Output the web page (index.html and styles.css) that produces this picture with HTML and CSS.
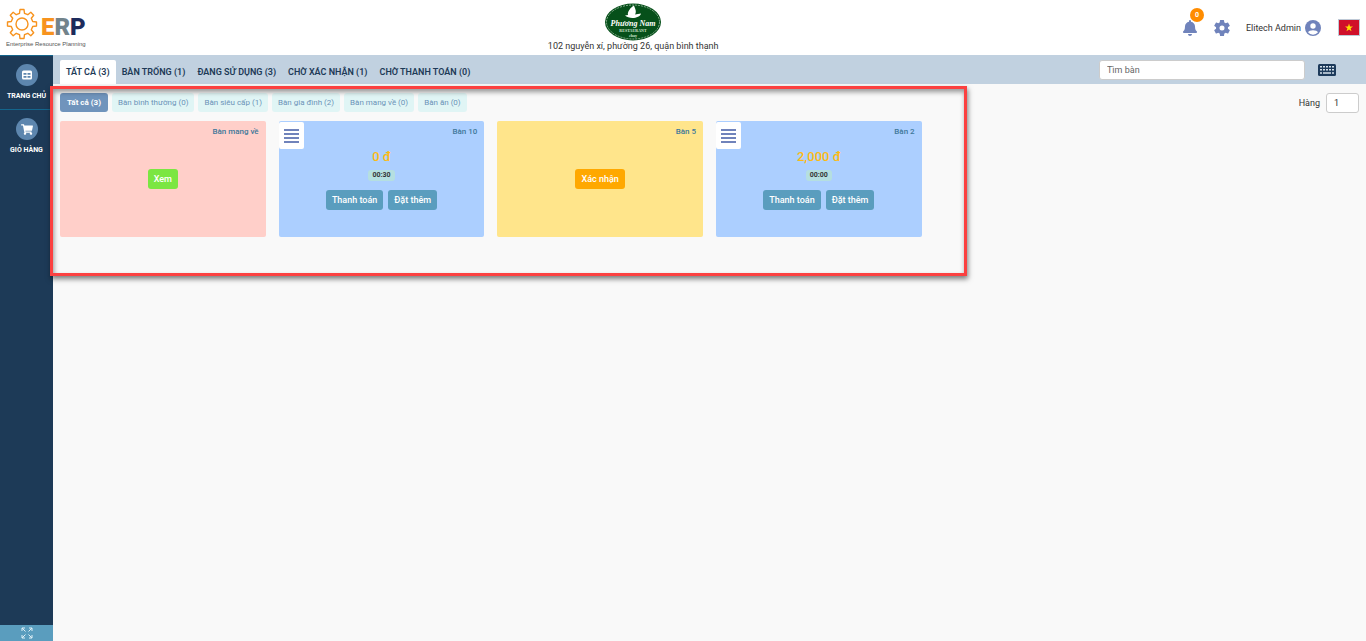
FILE: index.html
```html
<!DOCTYPE html>
<html lang="vi">
<head>
<meta charset="utf-8">
<title>ERP - Quản lý bàn</title>
<link rel="stylesheet" href="styles.css">
</head>
<body>
<header class="header">
  <a class="brand" href="#" aria-label="ERP">
    <svg width="88" height="48" viewBox="0 0 88 48">
      <path class="gear" d="M19.500 13.300L20 9.500h4l.5 3.800 3.300 1.400 3-2.400 2.900 2.900-2.400 3 1.400 3.300 3.800.5v4l-3.800.5-1.400 3.300 2.400 3-2.900 2.900-3-2.400-3.300 1.400-.5 3.800h-4l-.5-3.800-3.300-1.400-3 2.400-2.900-2.900 2.400-3-1.400-3.300-3.800-.5v-4l3.800-.5 1.400-3.300-2.400-3 2.900-2.900 3 2.400z"/>
      <circle class="gear" cx="22" cy="24" r="6"/>
      <text class="brand-letters" x="41" y="35"><tspan fill="#f7931e">E</tspan><tspan fill="#72838b">R</tspan><tspan fill="#1d2b5c">P</tspan></text>
      <text class="brand-sub" x="6" y="46">Enterprise Resource Planning</text>
    </svg>
  </a>
  <div class="shop">
    <svg width="56" height="38" viewBox="0 0 56 38">
      <ellipse cx="28" cy="19" rx="28" ry="18.500" fill="#06501a"/>
      <ellipse cx="28" cy="19" rx="26.500" ry="17" fill="none" stroke="#b9d0bb" stroke-width=".7" stroke-dasharray="2 1"/>
      <path d="M23 12c-1-3 3-8 6-9.500 1 3 3 6 1 9l6-1c-1 5-12 6-16 2z" fill="#fff"/>
      <text class="shop-name" x="28" y="23">Phương Nam</text>
      <text class="shop-sub" x="28" y="29">RESTAURANT</text>
      <text class="shop-sub" x="28" y="34">chay</text>
    </svg>
    <div class="address">102 nguyễn xí, phường 26, quận bình thạnh</div>
  </div>
  <div class="tools">
    <button class="icon-btn bell" aria-label="Thông báo">
      <svg width="14" height="16" viewBox="0 0 448 512"><path fill="#7083bb" d="M224 512c35 0 64-29 64-64H160c0 35 29 64 64 64zm215-150c-19-20-55-51-55-154 0-77-54-139-128-154V32a32 32 0 0 0-64 0v22C118 69 64 131 64 208c0 103-36 134-55 154-6 6-9 14-9 22 0 16 13 32 32 32h384c19 0 32-16 32-32 0-8-3-16-9-22z"/></svg>
      <span class="badge">0</span>
    </button>
    <button class="icon-btn" aria-label="Cài đặt">
      <svg width="20" height="20" viewBox="0 0 24 24"><path fill="#7083bb" d="M19.140 12.940c.04-.3.060-.61.060-.94s-.02-.64-.07-.94l2.030-1.580a.49.490 0 0 0 .12-.61l-1.920-3.320a.49.490 0 0 0-.59-.22l-2.390.96a7 7 0 0 0-1.620-.94l-.36-2.540a.48.480 0 0 0-.48-.41h-3.840a.47.470 0 0 0-.47.410l-.36 2.540c-.59.240-1.130.57-1.620.94l-2.390-.96a.48.480 0 0 0-.59.220L2.740 8.870a.47.470 0 0 0 .12.610l2.030 1.580a7 7 0 0 0 0 1.880l-2.030 1.580a.49.490 0 0 0-.12.610l1.920 3.320c.12.220.37.290.59.220l2.390-.96c.5.380 1.030.7 1.620.94l.36 2.540c.05.240.24.410.48.410h3.840c.24 0 .44-.17.470-.41l.36-2.540a7 7 0 0 0 1.620-.94l2.390.96c.22.080.47 0 .59-.22l1.920-3.320a.47.470 0 0 0-.12-.61zM12 15a3 3 0 1 1 0-6 3 3 0 0 1 0 6z"/></svg>
    </button>
    <a class="user" href="#">Elitech Admin
      <svg width="16" height="16" viewBox="0 0 16 16"><circle cx="8" cy="8" r="8" fill="#7083bb"/><circle cx="8" cy="6" r="2.700" fill="#fff"/><path d="M3 12.300C4 9.500 12 9.500 13 12.300a6.500 6.500 0 0 1-10 0z" fill="#fff"/></svg>
    </a>
    <button class="flag" aria-label="Tiếng Việt">
      <svg width="20" height="15" viewBox="0 0 20 15"><path fill="#ffe000" d="M10 3.500l1 3h3l-2.400 1.800.9 3-2.500-1.800-2.500 1.800.9-3L6 6.500h3z"/></svg>
    </button>
  </div>
</header>
<div class="layout">
  <aside class="sidebar">
    <nav>
      <a class="side-item" href="#">
        <span class="side-icon"><svg width="10" height="10" viewBox="0 0 10 10"><rect y=".5" width="10" height="9" rx="1.500" fill="#fff"/><path d="M1.500 3h3v1.700h-3zM5.500 3h3v1.700h-3zM1.500 6h3v1.700h-3zM5.500 6h3v1.700h-3z" fill="#5d86ae"/></svg></span>
        TRANG CHỦ
      </a>
      <a class="side-item" href="#">
        <span class="side-icon"><svg width="12" height="11" viewBox="0 0 576 512"><path fill="#fff" d="M528 301l47-208c4-15-8-29-23-29H159l-9-45C148 8 138 0 126 0H24C11 0 0 11 0 24v16c0 13 11 24 24 24h70l70 343a56 56 0 1 0 67 9h210a56 56 0 1 0 64-10l5-26c4-15-8-29-23-29H218l-7-32h294c11 0 21-8 23-18z"/></svg></span>
        GIỎ HÀNG
      </a>
    </nav>
    <button class="expand" aria-label="Toàn màn hình">
      <svg width="12" height="12" viewBox="0 0 12 12" fill="none" stroke="#dff0f6"><path d="M1 4V1h3M8 1h3v3M1 8v3h3M8 11h3V8M1 1l3.500 3.500M11 1L7.500 4.500M1 11l3.500-3.500M11 11L7.500 7.500"/></svg>
    </button>
  </aside>
  <main class="main">
    <div class="tabbar">
      <nav class="tabs">
        <button class="tab tab-active">TẤT CẢ (3)</button>
        <button class="tab">BÀN TRỐNG (1)</button>
        <button class="tab">ĐANG SỬ DỤNG (3)</button>
        <button class="tab">CHỜ XÁC NHẬN (1)</button>
        <button class="tab">CHỜ THANH TOÁN (0)</button>
      </nav>
      <input class="search" type="text" placeholder="Tìm bàn" aria-label="Tìm bàn">
      <button class="icon-btn keyboard" aria-label="Bàn phím">
        <svg width="18" height="12" viewBox="0 0 18 12"><rect width="18" height="12" rx="1.500" fill="#1d3a5b"/><path stroke="#d5e1ec" stroke-width="1.500" stroke-dasharray="2 1" d="M2 2.700h14.500M2 5.700h14.500"/><path stroke="#d5e1ec" stroke-width="1.500" d="M2 9h2M5 9h8M14 9h2"/></svg>
      </button>
    </div>
    <div class="filters">
      <div class="chips">
        <button class="chip chip-active">Tất cả (3)</button>
        <button class="chip">Bàn bình thường (0)</button>
        <button class="chip">Bàn siêu cấp (1)</button>
        <button class="chip">Bàn gia đình (2)</button>
        <button class="chip">Bàn mang về (0)</button>
        <button class="chip">Bàn ăn (0)</button>
      </div>
      <label class="row-label" for="row">Hàng</label>
      <input class="row-input" id="row" type="text" value="1">
    </div>
    <section class="cards">
      <article class="card card-pink">
        <h2 class="card-name">Bàn mang về</h2>
        <div class="card-body"><button class="btn btn-green">Xem</button></div>
      </article>
      <article class="card card-blue">
        <button class="menu" aria-label="Menu"><svg width="15" height="14" viewBox="0 0 15 14"><path d="M0 1h15M0 5h15M0 9h15M0 13h15" stroke="#7083bb" stroke-width="2"/></svg></button>
        <h2 class="card-name">Bàn 10</h2>
        <div class="card-body">
          <div class="price">0 đ</div>
          <div class="time">00:30</div>
          <div class="actions"><button class="btn">Thanh toán</button><button class="btn">Đặt thêm</button></div>
        </div>
      </article>
      <article class="card card-yellow">
        <h2 class="card-name">Bàn 5</h2>
        <div class="card-body"><button class="btn btn-orange">Xác nhận</button></div>
      </article>
      <article class="card card-blue">
        <button class="menu" aria-label="Menu"><svg width="15" height="14" viewBox="0 0 15 14"><path d="M0 1h15M0 5h15M0 9h15M0 13h15" stroke="#7083bb" stroke-width="2"/></svg></button>
        <h2 class="card-name">Bàn 2</h2>
        <div class="card-body">
          <div class="price">2,000 đ</div>
          <div class="time">00:00</div>
          <div class="actions"><button class="btn">Thanh toán</button><button class="btn">Đặt thêm</button></div>
        </div>
      </article>
    </section>
    <div class="highlight"></div>
  </main>
</div>
</body>
</html>
```
FILE: styles.css
```css
* { box-sizing: border-box; }
body {
  margin: 0;
  min-height: 100vh;
  display: flex;
  flex-direction: column;
  font-family: Roboto, "Noto Sans", sans-serif;
  font-size: 9px;
  color: #333;
  background: #f9f9f9;
}
button, input { font: inherit; color: inherit; margin: 0; }
button { border: 0; padding: 0; background: none; cursor: pointer; white-space: nowrap; }
a { color: inherit; text-decoration: none; }
svg { display: block; }

.header {
  display: grid;
  grid-template-columns: 11fr auto 13fr;
  height: 55px;
  background: #fff;
}
.gear { fill: none; stroke: #f7931e; stroke-width: 1.4; stroke-linejoin: round; }
.brand-letters { font: 900 24px Roboto, sans-serif; }
.brand-sub { font: 6px "Liberation Sans", sans-serif; fill: #555; }
.shop { display: flex; flex-direction: column; align-items: center; padding-top: 3px; }
.shop-name { font: italic 700 8px "Liberation Serif", serif; fill: #fff; text-anchor: middle; }
.shop-sub { font: 700 4px "Liberation Serif", serif; fill: #d5e5d7; text-anchor: middle; }
.address { line-height: 10px; }
.tools {
  display: flex;
  justify-content: flex-end;
  align-items: center;
  padding-right: 6px;
}
.icon-btn { position: relative; }
.bell { margin-right: 15px; }
.badge {
  position: absolute;
  left: 7px;
  top: -12px;
  width: 14px;
  height: 14px;
  border-radius: 50%;
  background: #ff8c00;
  color: #fff;
  font-size: 7px;
  font-weight: 700;
  line-height: 14px;
}
.user { display: flex; align-items: center; gap: 4px; margin: 0 17px 0 14px; }
.flag { border: 1px solid #bfc9d6; background: #d0102a; }

.layout { flex: 1; display: flex; }
.sidebar {
  width: 53px;
  display: flex;
  flex-direction: column;
  justify-content: space-between;
  background: #1d3a57;
  color: #fff;
}
.side-item {
  display: flex;
  flex-direction: column;
  align-items: center;
  gap: 5px;
  height: 54px;
  padding-top: 8px;
  border-top: 1px solid #14658c;
  font-size: 7px;
  font-weight: 700;
  line-height: 10px;
  white-space: nowrap;
}
.side-icon {
  display: flex;
  align-items: center;
  justify-content: center;
  width: 22px;
  height: 22px;
  border-radius: 50%;
  background: #5d86ae;
}
.expand { display: flex; justify-content: center; align-items: center; height: 16px; background: #5a9dbe; }

.main { position: relative; flex: 1; min-width: 0; }
.tabbar { display: flex; align-items: center; height: 29px; padding: 0 30px 0 7px; background: #c1d1e0; }
.tabs { display: flex; flex: 1; align-self: flex-end; }
.tab { height: 24px; padding: 0 6px; border-radius: 2px 2px 0 0; font-weight: 600; color: #1d3a57; }
.tab-active { background: #fff; }
.search { width: 206px; height: 20px; padding: 0 7px; border: 1px solid #ccc; border-radius: 3px; background: #fff; }
.search::placeholder { color: #666; opacity: 1; }
.keyboard { margin-left: 13px; }
.filters { display: flex; align-items: center; height: 37px; padding: 0 7px; }
.chips { display: flex; flex: 1; gap: 4px; }
.chip { height: 19px; padding: 0 6px; border-radius: 3px; background: #e0f5f5; color: #6b93b8; font-size: 8px; }
.chip-active { padding: 0 7px; background: #7094bc; color: #fff; font-weight: 700; }
.row-label { margin-right: 6px; }
.row-input { width: 33px; height: 20px; padding: 0 7px; border: 1px solid #ccc; border-radius: 3px; background: #fff; }

.cards { display: grid; grid-template-columns: repeat(6, 1fr); gap: 13px; padding: 0 7px; }
.card { position: relative; display: flex; flex-direction: column; height: 116px; border-radius: 2px; }
.card-pink { background: #ffcfc9; }
.card-blue { background: #accfff; }
.card-yellow { background: #ffe58b; }
.card-name { margin: 0; padding: 5px 7px 0; font-size: 8px; font-weight: 500; line-height: 11px; text-align: right; color: #40789a; }
.menu {
  position: absolute;
  left: 0;
  top: 1px;
  display: flex;
  align-items: center;
  justify-content: center;
  width: 25px;
  height: 27px;
  border-radius: 2px;
  background: #fff;
}
.card-body {
  flex: 1;
  display: flex;
  flex-direction: column;
  align-items: center;
  justify-content: center;
  padding-bottom: 16px;
}
.price { margin-bottom: 5px; font-size: 13px; font-weight: 500; line-height: 16px; color: #fdbb14; }
.time { padding: 0 4px; margin-bottom: 9px; border-radius: 3px; background: #b5dfe0; color: #333; font-size: 7px; font-weight: 700; line-height: 11px; }
.actions { display: flex; gap: 5px; }
.btn { height: 20px; padding: 0 6px; border-radius: 3px; background: #5a9dbe; color: #fff; font-weight: 500; }
.btn-green { background: #7be642; }
.btn-orange { background: #ffa800; }

.highlight {
  position: absolute;
  left: -3px;
  top: 31px;
  width: 917px;
  height: 190px;
  border: 3px solid #fb4040;
  box-shadow: 1px 3px 5px rgba(0, 0, 0, .5), inset 1px 3px 5px rgba(0, 0, 0, .4);
  pointer-events: none;
}
```
